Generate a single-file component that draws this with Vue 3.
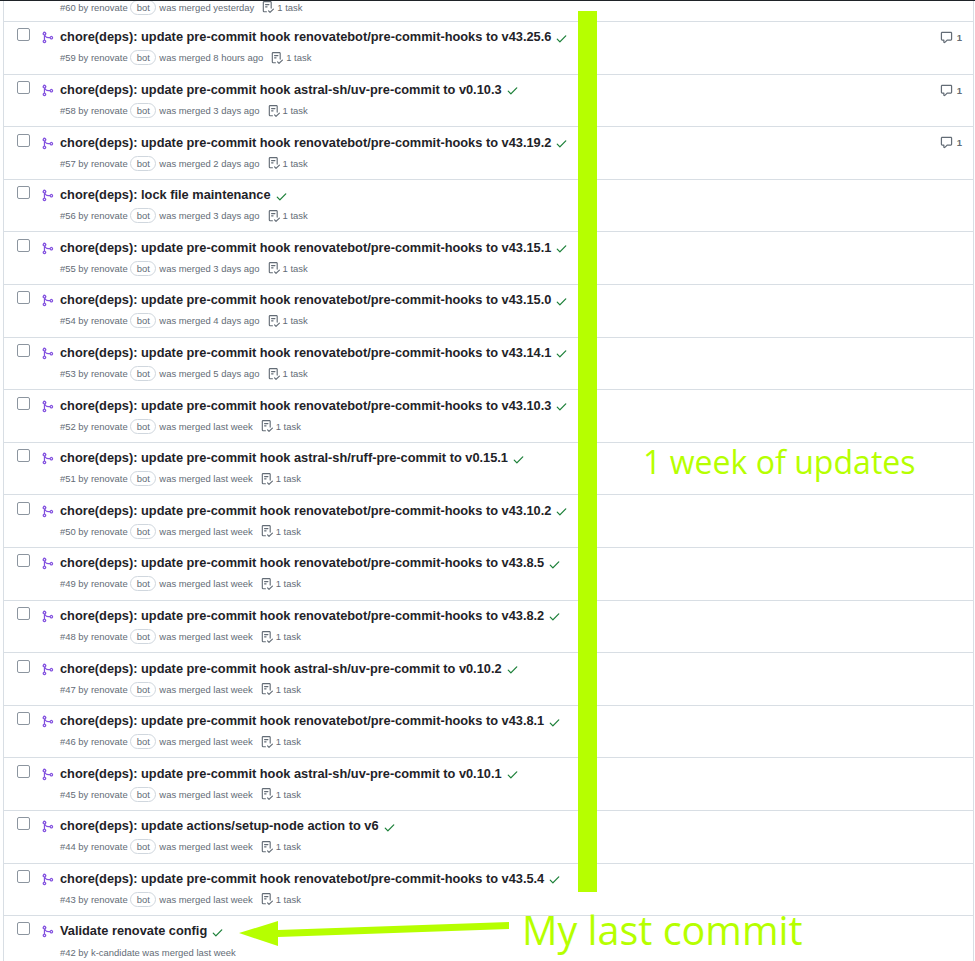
<script setup>
const merge = 'M5.45 5.154A4.25 4.25 0 0 0 9.25 7.5h1.378a2.251 2.251 0 1 1 0 1.5H9.25A5.734 5.734 0 0 1 5 7.123v3.505a2.25 2.25 0 1 1-1.5 0V5.372a2.25 2.25 0 1 1 1.95-.218ZM4.25 13.5a.75.75 0 1 0 0-1.5.75.75 0 0 0 0 1.5Zm8.5-4.5a.75.75 0 1 0 0-1.5.75.75 0 0 0 0 1.5ZM4.25 4a.75.75 0 1 0 0-1.5.75.75 0 0 0 0 1.5Z'
const check = 'M13.78 4.22a.75.75 0 0 1 0 1.06l-7.25 7.25a.75.75 0 0 1-1.06 0L2.22 9.28a.751.751 0 0 1 .018-1.042.751.751 0 0 1 1.042-.018L6 10.94l6.72-6.72a.75.75 0 0 1 1.06 0Z'
const comment = 'M1 2.75C1 1.784 1.784 1 2.75 1h10.5c.966 0 1.75.784 1.75 1.75v7.5A1.75 1.75 0 0 1 13.25 12H9.06l-2.573 2.573A1.458 1.458 0 0 1 4 13.543V12H2.75A1.75 1.75 0 0 1 1 10.25Zm1.75-.25a.25.25 0 0 0-.25.25v7.5c0 .138.112.25.25.25h2a.75.75 0 0 1 .75.75v2.19l2.72-2.72a.749.749 0 0 1 .53-.22h4.5a.25.25 0 0 0 .25-.25v-7.5a.25.25 0 0 0-.25-.25Z'
const checklist = 'M2.5 1.75v11.5c0 .138.112.25.25.25h3.17a.75.75 0 0 1 0 1.5H2.75A1.75 1.75 0 0 1 1 13.25V1.75C1 .784 1.784 0 2.75 0h8.5C12.216 0 13 .784 13 1.75v7.736a.75.75 0 0 1-1.5 0V1.75a.25.25 0 0 0-.25-.25h-8.5a.25.25 0 0 0-.25.25Zm13.274 9.537v-.001l-4.557 4.45a.75.75 0 0 1-1.055-.008l-1.943-1.95a.75.75 0 0 1 1.062-1.058l1.419 1.425 4.026-3.932a.75.75 0 1 1 1.048 1.074ZM4.75 4h4.5a.75.75 0 0 1 0 1.5h-4.5a.75.75 0 0 1 0-1.5ZM4 7.75A.75.75 0 0 1 4.75 7h2a.75.75 0 0 1 0 1.5h-2A.75.75 0 0 1 4 7.75Z'

const rn = 'chore(deps): update pre-commit hook renovatebot/pre-commit-hooks to '
const uv = 'chore(deps): update pre-commit hook astral-sh/uv-pre-commit to '
const rows = [
  { n: 59, title: rn + 'v43.25.6', when: '8 hours ago', c: 1 },
  { n: 58, title: uv + 'v0.10.3', when: '3 days ago', c: 1 },
  { n: 57, title: rn + 'v43.19.2', when: '2 days ago', c: 1 },
  { n: 56, title: 'chore(deps): lock file maintenance', when: '3 days ago' },
  { n: 55, title: rn + 'v43.15.1', when: '3 days ago' },
  { n: 54, title: rn + 'v43.15.0', when: '4 days ago' },
  { n: 53, title: rn + 'v43.14.1', when: '5 days ago' },
  { n: 52, title: rn + 'v43.10.3', when: 'last week' },
  { n: 51, title: 'chore(deps): update pre-commit hook astral-sh/ruff-pre-commit to v0.15.1', when: 'last week' },
  { n: 50, title: rn + 'v43.10.2', when: 'last week' },
  { n: 49, title: rn + 'v43.8.5', when: 'last week' },
  { n: 48, title: rn + 'v43.8.2', when: 'last week' },
  { n: 47, title: uv + 'v0.10.2', when: 'last week' },
  { n: 46, title: rn + 'v43.8.1', when: 'last week' },
  { n: 45, title: uv + 'v0.10.1', when: 'last week' },
  { n: 44, title: 'chore(deps): update actions/setup-node action to v6', when: 'last week' },
  { n: 43, title: rn + 'v43.5.4', when: 'last week' },
  { n: 42, title: 'Validate renovate config', when: 'last week', human: true }
]
</script>

<template>
  <div class="page">
    <div class="list">
      <div class="row first">
        <div class="meta">
          <span>#60 by renovate</span><span class="bot">bot</span><span>was merged yesterday</span>
          <svg class="task-icon" viewBox="0 0 16 16"><path :d="checklist" /></svg>
          <span>1 task</span>
        </div>
      </div>
      <div v-for="r in rows" :key="r.n" class="row">
        <span class="box"></span>
        <svg class="merge" viewBox="0 0 16 16"><path :d="merge" /></svg>
        <div class="main">
          <div class="title">
            <span>{{ r.title }}</span>
            <svg class="check" viewBox="0 0 16 16"><path :d="check" /></svg>
          </div>
          <div class="meta" v-if="r.human">
            <span>#{{ r.n }} by k-candidate was merged {{ r.when }}</span>
          </div>
          <div class="meta" v-else>
            <span>#{{ r.n }} by renovate</span><span class="bot">bot</span><span>was merged {{ r.when }}</span>
            <svg class="task-icon" viewBox="0 0 16 16"><path :d="checklist" /></svg>
            <span>1 task</span>
          </div>
        </div>
        <div v-if="r.c" class="comments">
          <svg class="comment-icon" viewBox="0 0 16 16"><path :d="comment" /></svg>
          <span>{{ r.c }}</span>
        </div>
      </div>
    </div>

    <div class="bar"></div>
    <div class="note week">1 week of updates</div>
    <div class="note last">My last commit</div>
    <svg class="arrow" viewBox="0 0 270 30" width="270" height="30">
      <polygon points="0,14 39,2 39,11 270,3 270,10 39,18 39,27" fill="#b6ff00" />
    </svg>
  </div>
</template>

<style scoped>
.page {
  position: relative;
  width: 975px;
  height: 961px;
  overflow: hidden;
  background: #fff;
  font-family: "Liberation Sans", Arial, sans-serif;
  border-top: 1px solid #1f2328;
  box-sizing: border-box;
}
.list {
  margin-left: 3px;
  width: 971px;
  box-sizing: border-box;
  border-left: 1px solid #d8dee4;
  border-right: 1px solid #d8dee4;
}
.row {
  display: flex;
  align-items: flex-start;
  height: 52.6px;
  box-sizing: border-box;
  border-bottom: 1px solid #d8dee4;
  padding: 6.4px 11px 0 13px;
}
.row.first {
  height: 21px;
  padding: 0 0 0 56px;
  align-items: flex-start;
}
.row:last-child { border-bottom: none; }
.box {
  flex: none;
  width: 11px;
  height: 11px;
  border: 1px solid #8c959f;
  border-radius: 2px;
}
.merge {
  flex: none;
  width: 13px;
  height: 13px;
  margin: 3px 0 0 11px;
  fill: #8250df;
}
.main {
  flex: 1;
  margin-left: 6px;
  min-width: 0;
}
.title {
  display: flex;
  align-items: center;
  font-size: 12.8px;
  line-height: 18px;
  font-weight: 700;
  color: #1f2328;
}
.check {
  flex: none;
  width: 13px;
  height: 13px;
  margin: 2px 0 0 4px;
  fill: #1a7f37;
}
.meta {
  display: flex;
  align-items: center;
  height: 16px;
  margin-top: 3.6px;
  font-size: 9.45px;
  color: #636c76;
  white-space: nowrap;
}
.row.first .meta { margin-top: -2px; }
.bot {
  margin: 0 3px 0 2.5px;
  padding: 0 5.5px;
  height: 15px;
  line-height: 13px;
  box-sizing: border-box;
  border: 1px solid #d0d7de;
  border-radius: 8px;
}
.task-icon {
  width: 12px;
  height: 12px;
  margin: 0 3px 0 8px;
  fill: #636c76;
}
.comments {
  flex: none;
  display: flex;
  align-items: center;
  gap: 4px;
  margin-top: 2.6px;
  font-size: 9.5px;
  font-weight: 700;
  color: #636c76;
}
.comment-icon {
  width: 13px;
  height: 13px;
  fill: #636c76;
}
.bar {
  position: absolute;
  left: 578px;
  top: 10px;
  width: 19px;
  height: 881px;
  background: #b6ff00;
}
.note {
  position: absolute;
  font-family: "Open Sans", "Noto Sans", sans-serif;
  font-weight: 400;
  color: #b6ff00;
  white-space: nowrap;
}
.week {
  left: 643px;
  top: 438px;
  font-size: 32.1px;
  line-height: 45px;
}
.last {
  left: 522px;
  top: 902px;
  font-size: 39.5px;
  line-height: 54px;
}
.arrow {
  position: absolute;
  left: 239px;
  top: 918px;
}
</style>

<style>
html, body { margin: 0; padding: 0; background: #fff; }
</style>
